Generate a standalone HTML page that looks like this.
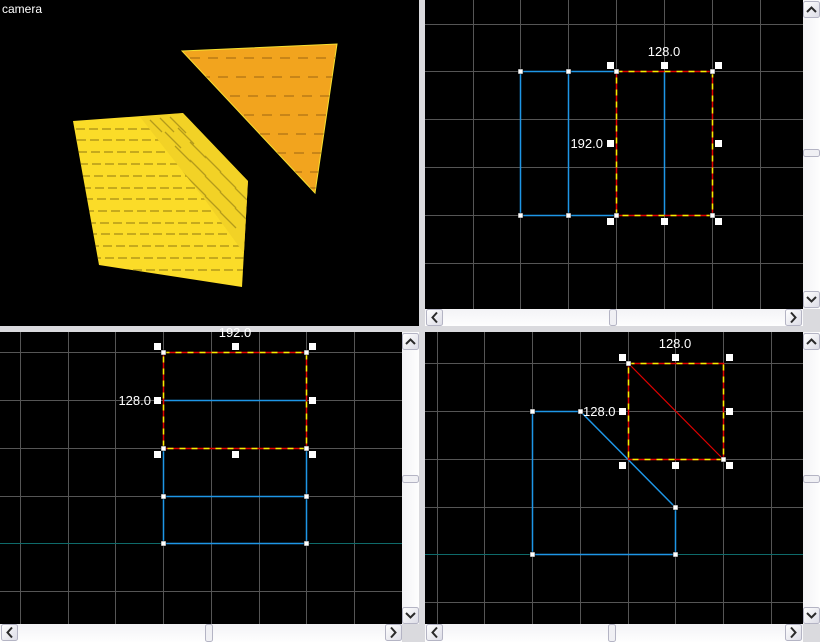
<!DOCTYPE html>
<html><head><meta charset="utf-8"><style>
html,body{margin:0;padding:0;width:820px;height:642px;overflow:hidden;background:#d6d6dc}
svg{display:block}
text{font-family:"Liberation Sans",sans-serif;font-size:13px;fill:#fff}
</style></head><body>
<svg width="820" height="642" viewBox="0 0 820 642" xmlns="http://www.w3.org/2000/svg">
<defs>
<linearGradient id="tv" x1="0" y1="0" x2="1" y2="0"><stop offset="0" stop-color="#f3f3f6"/><stop offset="1" stop-color="#fefefe"/></linearGradient>
<linearGradient id="th" x1="0" y1="0" x2="0" y2="1"><stop offset="0" stop-color="#f3f3f6"/><stop offset="1" stop-color="#fefefe"/></linearGradient>
<linearGradient id="btn" x1="0" y1="0" x2="1" y2="1"><stop offset="0" stop-color="#ffffff"/><stop offset="1" stop-color="#dcdce6"/></linearGradient>
<g id="bu"><rect x="0.5" y="0.5" width="16" height="16" rx="2" fill="url(#btn)" stroke="#b4b4c4"/></g>
<clipPath id="cube"><polygon points="73,121 183,113 248,181 242,287 99,265"/></clipPath>
<clipPath id="tri"><polygon points="182,51 337,44 315,193"/></clipPath>
<clipPath id="side"><polygon points="140,117 183,113 248,181 245,255 205,200"/></clipPath>
</defs>
<rect x="0" y="0" width="820" height="642" fill="#dadade"/>

<!-- camera view -->
<rect x="0" y="0" width="419" height="326" fill="#000"/>
<text x="2" y="13" style="font-size:12px">camera</text>
<polygon points="182,51 337,44 315,193" fill="#f2a41e" stroke="#f6e030" stroke-width="1"/>
<polygon points="73,121 183,113 248,181 242,287 99,265" fill="#fbdc28"/>
<g clip-path="url(#cube)">
<g stroke="#8a7412" stroke-width="1.3" stroke-dasharray="9 4" opacity="0.75">
<path d="M76 129H250M77 140H250M78 152H250M79 164H250M81 176H250M82 188H250M84 199H250M85 211H250M87 223H250M88 234H250M90 246H250M92 258H250M94 270H250"/>
</g>
<g clip-path="url(#side)">
<polygon points="140,117 183,113 248,181 245,255 205,200" fill="#f2d226"/>
<g stroke="#9a8418" stroke-width="1.3" opacity="0.7">
<path d="M150 120l12 12M160 118l14 14M170 117l16 16M150 135l14 14M165 132l16 16M178 128l16 16M160 150l16 16M175 146l16 16M190 142l16 16M175 165l16 16M190 160l16 16M205 156l16 16M190 180l16 16M205 176l16 16M220 172l16 16M205 196l16 16M220 192l16 16M235 188l12 12M220 212l16 16M235 208l12 12"/>
</g>
</g>
</g>
<g clip-path="url(#tri)" stroke="#8a5a10" stroke-width="1.3" stroke-dasharray="10 8" opacity="0.65">
<path d="M190 58H340M200 77H340M212 96H340M226 115H340M242 134H340M258 153H340M274 172H340M290 188H340"/>
</g>

<!-- top right view -->
<rect x="425" y="0" width="378" height="309" fill="#000"/>
<g stroke="#555" stroke-width="1">
<path d="M473.5 0V309M520.5 0V309M568.5 0V309M616.5 0V309M664.5 0V309M712.5 0V309M760.5 0V309"/>
<path d="M425 24.5H803M425 71.5H803M425 119.5H803M425 167.5H803M425 215.5H803M425 263.5H803"/>
</g>
<g stroke="#1e96e6" stroke-width="1.5" fill="none">
<path d="M520.5 71.5H616.5M520.5 215.5H616.5M520.5 71.5V215.5M568.5 71.5V215.5M664.5 71.5V215.5"/>
</g>
<rect x="616.5" y="71.5" width="96" height="144" fill="none" stroke="#e00000" stroke-width="1.5"/>
<rect x="616.5" y="71.5" width="96" height="144" fill="none" stroke="#f0f000" stroke-width="1.5" stroke-dasharray="6 6"/>
<g fill="#fff" stroke="#000" stroke-width="0.5">
<rect x="518" y="69" width="5" height="5"/><rect x="566" y="69" width="5" height="5"/><rect x="614" y="69" width="5" height="5"/><rect x="710" y="69" width="5" height="5"/>
<rect x="518" y="213" width="5" height="5"/><rect x="566" y="213" width="5" height="5"/><rect x="614" y="213" width="5" height="5"/><rect x="710" y="213" width="5" height="5"/>
</g>
<g fill="#fff">
<rect x="607" y="62" width="7" height="7"/><rect x="661" y="62" width="7" height="7"/><rect x="715" y="62" width="7" height="7"/>
<rect x="607" y="140" width="7" height="7"/><rect x="715" y="140" width="7" height="7"/>
<rect x="607" y="218" width="7" height="7"/><rect x="661" y="218" width="7" height="7"/><rect x="715" y="218" width="7" height="7"/>
</g>
<text x="664" y="56" text-anchor="middle">128.0</text>
<text x="603" y="148" text-anchor="end">192.0</text>

<!-- bottom left view -->
<rect x="0" y="332" width="402" height="292" fill="#000"/>
<g stroke="#555" stroke-width="1">
<path d="M20.5 332V624M68.5 332V624M115.5 332V624M163.5 332V624M211.5 332V624M259.5 332V624M306.5 332V624M354.5 332V624"/>
<path d="M0 352.5H402M0 400.5H402M0 448.5H402M0 496.5H402M0 591.5H402"/>
</g>
<path d="M0 543.5H402" stroke="#0e6a6a" stroke-width="1"/>
<g stroke="#1e96e6" stroke-width="1.5" fill="none">
<path d="M163.5 400.5H306.5M163.5 496.5H306.5M163.5 543.5H306.5M163.5 448.5V543.5M306.5 448.5V543.5"/>
</g>
<rect x="163.5" y="352.5" width="143" height="96" fill="none" stroke="#e00000" stroke-width="1.5"/>
<rect x="163.5" y="352.5" width="143" height="96" fill="none" stroke="#f0f000" stroke-width="1.5" stroke-dasharray="6 6"/>
<g fill="#fff" stroke="#000" stroke-width="0.5">
<rect x="161" y="350" width="5" height="5"/><rect x="304" y="350" width="5" height="5"/><rect x="161" y="446" width="5" height="5"/><rect x="304" y="446" width="5" height="5"/>
<rect x="161" y="494" width="5" height="5"/><rect x="304" y="494" width="5" height="5"/><rect x="161" y="541" width="5" height="5"/><rect x="304" y="541" width="5" height="5"/>
</g>
<g fill="#fff">
<rect x="154" y="343" width="7" height="7"/><rect x="232" y="343" width="7" height="7"/><rect x="309" y="343" width="7" height="7"/>
<rect x="154" y="397" width="7" height="7"/><rect x="309" y="397" width="7" height="7"/>
<rect x="154" y="451" width="7" height="7"/><rect x="232" y="451" width="7" height="7"/><rect x="309" y="451" width="7" height="7"/>
</g>
<text x="235" y="337" text-anchor="middle">192.0</text>
<text x="151" y="405" text-anchor="end">128.0</text>

<!-- bottom right view -->
<rect x="425" y="332" width="378" height="292" fill="#000"/>
<g stroke="#555" stroke-width="1">
<path d="M437.5 332V624M484.5 332V624M532.5 332V624M580.5 332V624M628.5 332V624M675.5 332V624M723.5 332V624M771.5 332V624"/>
<path d="M425 363.5H803M425 411.5H803M425 459.5H803M425 507.5H803M425 602.5H803"/>
</g>
<path d="M425 554.5H803" stroke="#0e6a6a" stroke-width="1"/>
<g stroke="#1e96e6" stroke-width="1.5" fill="none">
<path d="M532.5 411.5H580.5L675.5 507.5V554.5H532.5Z"/>
</g>
<rect x="628.5" y="363.5" width="95" height="96" fill="none" stroke="#e00000" stroke-width="1.5"/>
<rect x="628.5" y="363.5" width="95" height="96" fill="none" stroke="#f0f000" stroke-width="1.5" stroke-dasharray="6 6"/>
<path d="M628.5 363.5L723.5 459.5" stroke="#e00000" stroke-width="1.2"/>
<g fill="#fff" stroke="#000" stroke-width="0.5">
<rect x="530" y="409" width="5" height="5"/><rect x="578" y="409" width="5" height="5"/><rect x="673" y="505" width="5" height="5"/>
<rect x="530" y="552" width="5" height="5"/><rect x="673" y="552" width="5" height="5"/>
<rect x="626" y="361" width="5" height="5"/><rect x="721" y="457" width="5" height="5"/>
</g>
<g fill="#fff">
<rect x="619" y="354" width="7" height="7"/><rect x="672" y="354" width="7" height="7"/><rect x="726" y="354" width="7" height="7"/>
<rect x="619" y="408" width="7" height="7"/><rect x="726" y="408" width="7" height="7"/>
<rect x="619" y="462" width="7" height="7"/><rect x="672" y="462" width="7" height="7"/><rect x="726" y="462" width="7" height="7"/>
</g>
<text x="675" y="348" text-anchor="middle">128.0</text>
<text x="583" y="416">128.0</text>

<!-- scrollbars: top right -->
<rect x="803" y="0" width="17" height="309" fill="url(#tv)"/>
<rect x="425" y="309" width="378" height="17" fill="url(#th)"/>
<rect x="803" y="309" width="17" height="17" fill="#dadade"/>
<use href="#bu" x="803" y="1"/><use href="#bu" x="803" y="291"/>
<use href="#bu" x="426" y="309"/><use href="#bu" x="785" y="309"/>
<rect x="803.5" y="149.5" width="16" height="7" rx="2" fill="#f0f0f4" stroke="#b4b4c4"/>
<rect x="609.5" y="309.5" width="7" height="16" rx="2" fill="#f0f0f4" stroke="#b4b4c4"/>
<!-- bottom left -->
<rect x="402" y="332" width="17" height="292" fill="url(#tv)"/>
<rect x="0" y="624" width="402" height="18" fill="url(#th)"/>
<rect x="402" y="624" width="17" height="18" fill="#dadade"/>
<use href="#bu" x="402" y="333"/><use href="#bu" x="402" y="607"/>
<use href="#bu" x="1" y="624"/><use href="#bu" x="385" y="624"/>
<rect x="402.5" y="475.5" width="16" height="7" rx="2" fill="#f0f0f4" stroke="#b4b4c4"/>
<rect x="205.5" y="624.5" width="7" height="17" rx="2" fill="#f0f0f4" stroke="#b4b4c4"/>
<!-- bottom right -->
<rect x="803" y="332" width="17" height="292" fill="url(#tv)"/>
<rect x="425" y="624" width="378" height="18" fill="url(#th)"/>
<rect x="803" y="624" width="17" height="18" fill="#dadade"/>
<use href="#bu" x="803" y="333"/><use href="#bu" x="803" y="607"/>
<use href="#bu" x="426" y="624"/><use href="#bu" x="785" y="624"/>
<rect x="803.5" y="475.5" width="16" height="7" rx="2" fill="#f0f0f4" stroke="#b4b4c4"/>
<rect x="608.5" y="624.5" width="7" height="17" rx="2" fill="#f0f0f4" stroke="#b4b4c4"/>

<!-- chevrons -->
<g fill="none" stroke="#2a2a2a" stroke-width="2">
<path d="M807 12l4.5-4.5 4.5 4.5"/><path d="M807 297l4.5 4.5 4.5-4.5"/>
<path d="M437 312.5l-4.5 5 4.5 5"/><path d="M791 312.5l4.5 5-4.5 5"/>
<path d="M406 344l4.5-4.5 4.5 4.5"/><path d="M406 613l4.5 4.5 4.5-4.5"/>
<path d="M12 627.5l-4.5 5 4.5 5"/><path d="M391 627.5l4.5 5-4.5 5"/>
<path d="M807 344l4.5-4.5 4.5 4.5"/><path d="M807 613l4.5 4.5 4.5-4.5"/>
<path d="M437 627.5l-4.5 5 4.5 5"/><path d="M791 627.5l4.5 5-4.5 5"/>
</g>
</svg>
</body></html>
